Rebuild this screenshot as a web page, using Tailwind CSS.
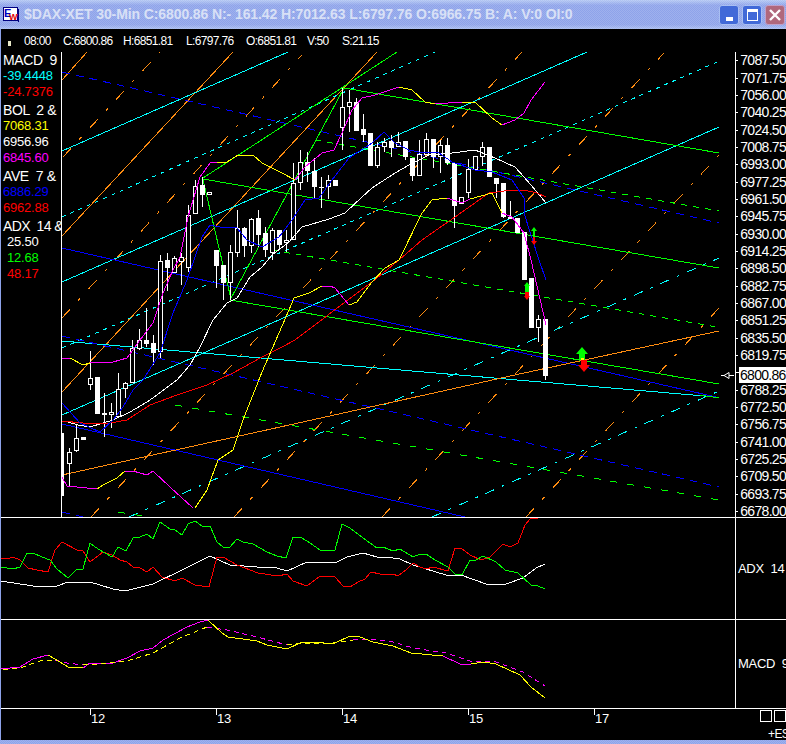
<!DOCTYPE html>
<html lang="en">
<head>
<meta charset="UTF-8" />
<title>$DAX-XET 30-Min</title>
<script src="https://cdn.jsdelivr.net/npm/@tailwindcss/browser@4"></script>
</head>
<body class="bg-black">
<div class="w-[786px] h-[744px] overflow-hidden flex flex-col font-['Liberation_Sans',Arial,sans-serif] text-white bg-black">

  <!-- window title bar -->
  <div class="h-[29px] shrink-0 flex items-center pl-[3px] pr-px bg-[conic-gradient(#ffffff26_25%,#0000_0_50%,#ffffff26_0_75%,#0000_0),linear-gradient(#b4c8f3,#8ea3ea_18%,#8ea3ea_85%,#a9bdf0)] bg-[length:2px_2px,100%_100%]">
    <svg width="16" height="15" viewBox="0 0 16 15" class="shrink-0">
      <rect x="0.5" y="0.5" width="14" height="13" fill="#fff" stroke="#000080" />
      <rect x="15" y="2" width="1" height="13" fill="#000080" />
      <text x="1" y="10" font-size="11" font-weight="700" fill="#0000c0" font-family="Liberation Sans">E</text>
      <text x="6" y="13" font-size="9" font-weight="700" fill="#e00000" font-family="Liberation Sans">W</text>
    </svg>
    <div class="ml-[5px] text-[14px] tracking-[-0.1px] font-bold text-[#d8e0f6] whitespace-nowrap">$DAX-XET 30-Min C:6800.86 N:- 161.42 H:7012.63 L:6797.76 O:6966.75 B: A: V:0 OI:0</div>
    <div class="ml-auto flex gap-[3px]">
      <div class="w-5 h-5 rounded-[3px] border border-[#a9bff2] bg-[#4169d8] flex items-end justify-center pb-[3px]"><div class="w-[7px] h-1 bg-white"></div></div>
      <div class="w-5 h-5 rounded-[3px] border border-[#a9bff2] bg-[#4169d8] flex items-center justify-center"><div class="w-[11px] h-[12px] border border-white border-t-[3px]"></div></div>
      <div class="w-5 h-5 rounded-[3px] border border-[#c0a0c8] bg-[#b0687c] flex items-center justify-center">
        <svg width="12" height="12" viewBox="0 0 12 12"><path d="M1 1L11 11M11 1L1 11" stroke="#fff" stroke-width="2.4" /></svg>
      </div>
    </div>
  </div>

  <div class="flex-1 min-h-0 flex flex-col border-l border-[#8ea3ea]">

    <!-- quote line -->
    <div class="h-[23px] shrink-0 flex items-center text-[12px] tracking-[-0.65px] whitespace-nowrap">
      <div class="w-[3px] h-[5px] ml-[7px] mr-[13px] mt-[5px] bg-[#e8e8c8]"></div>
      <span class="w-[39px]">08:00</span>
      <span class="w-[60px]">C:6800.86</span>
      <span class="w-[63px]">H:6851.81</span>
      <span class="w-[60px]">L:6797.76</span>
      <span class="w-[61px]">O:6851.81</span>
      <span class="w-[35px]">V:50</span>
      <span>S:21.15</span>
    </div>

    <!-- price panel -->
    <div class="h-[466px] shrink-0 flex border-b border-white">
      <div class="w-[61px] shrink-0 border-r border-white overflow-hidden pl-[2px] text-[13px] leading-[16px] tracking-[-0.2px]">
        <div class="mb-[2px]">
          <div class="text-[14px] tracking-[-0.4px] whitespace-pre">MACD  9</div>
          <div class="text-[#00ffff]">-39.4448</div>
          <div class="text-[#ff0000]">-24.7376</div>
        </div>
        <div class="mb-[2px]">
          <div class="text-[14px] tracking-[-0.4px] whitespace-pre">BOL  2 &amp;</div>
          <div class="text-[#ffff00]">7068.31</div>
          <div>6956.96</div>
          <div class="text-[#ff00ff]">6845.60</div>
        </div>
        <div class="mb-[2px]">
          <div class="text-[14px] tracking-[-0.4px] whitespace-pre">AVE  7 &amp;</div>
          <div class="text-[#0000ff]">6886.29</div>
          <div class="text-[#ff0000]">6962.88</div>
        </div>
        <div>
          <div class="text-[14px] tracking-[-0.6px] whitespace-pre">ADX  14 &amp;</div>
          <div class="pl-1">25.50</div>
          <div class="pl-1 text-[#00ff00]">12.68</div>
          <div class="pl-1 text-[#ff0000]">48.17</div>
        </div>
      </div>

      <svg id="chart" width="673" height="465" viewBox="62 52 673 465" class="shrink-0" shape-rendering="crispEdges" fill="none">
        <!-- orange fan -->
        <g stroke="#ff8c10">
          <path d="M62 80L87 52M62 236L233 52M62 392L377 52" />
          <path stroke-dasharray="12 12 3 12" d="M63 157L160 52M62 318L302 55M91 517L522 52M234 517L664 53M382 517L719 155M526 517L719 308" />
        </g>
        <!-- cyan channels -->
        <g stroke="#00ffff">
          <path d="M62 151L288 52M62 282L587 52M62 415L719 127" />
          <path stroke-dasharray="4 5" d="M62 217L435 52M62 348L717 62" />
          <path stroke-dasharray="10 8 3 8" d="M129 517L719 258M432 517L719 391" />
          <path d="M62 341L716 397" />
        </g>
        <!-- blue channels -->
        <g stroke="#0000ff">
          <path stroke-dasharray="8 6" d="M62 72L719 223M62 336L719 487M62 512L83 517" />
          <path d="M62 248L716 397M62 424L465 517" />
        </g>
        <!-- green channels -->
        <g stroke="#00ff00">
          <path d="M344 88L719 153M203 179L719 268M230 300L719 384M700 395L719 398" />
          <path stroke-dasharray="6 6" d="M315 140L719 211M272 250L717 327" />
          <path stroke-dasharray="7 10" d="M175 405L719 500M118 512L150 517" />
          <path d="M203 178L397 52M230 300L344 88M203 180L231 299" />
        </g>
        <path stroke="#ff8c10" d="M62 475L262 431L524 373L719 331" />

        <g id="candles"></g>

        <!-- averages -->
        <polyline stroke="#ffffff" points="68,422 78,425 90,427 103,423 113,420 130,412 147,402 157,395 177,380 190,365 200,347 213,320 227,303 237,298 250,277 262,267 272,255 289,242 302,227 329,219 345,213 362,197 372,188 395,173 409,165 429,155 452,153 475,150 495,158 515,167 524,177 537,192 546,203" />
        <polyline stroke="#ff0000" points="62,421 83,423 110,423 127,420 150,405 177,395 207,385 233,373 262,357 282,347 295,340 315,325 345,302 372,282 399,260 422,240 455,217 489,193 512,190 524,190 537,193 546,197" />
        <polyline stroke="#0000ff" points="62,403 80,423 100,432 113,420 123,407 133,390 143,380 160,353 173,313 187,280 195,257 202,237 210,225 220,227 237,228 247,240 262,247 279,237 292,220 305,200 319,198 332,180 349,158 372,143 384,132 395,143 409,150 419,152 439,153 452,162 475,170 492,172 512,180 524,198 524,213 539,260 546,280" />
        <!-- bollinger upper -->
        <polyline stroke="#ff00ff" points="62,358 70,358" />
        <polyline stroke="#ffff00" points="70,358 83,365 90,363" />
        <polyline stroke="#ff00ff" points="90,363 113,362 127,358 140,340 153,323 163,293 173,270 180,257 188,217 200,177 210,163 217,162" />
        <polyline stroke="#ffff00" points="217,162 227,162 238,155" />
        <polyline stroke="#ffff00" points="238,155 253,155 262,163 282,173 295,180" />
        <polyline stroke="#ff00ff" points="295,180 305,167 322,153 334,150 342,133 352,110 362,98 375,95 399,87" />
        <polyline stroke="#ffff00" points="399,87 412,90 425,102 435,104" />
        <polyline stroke="#ff00ff" points="435,104 462,102" />
        <polyline stroke="#ffff00" points="462,102 475,102 492,118 502,125" />
        <polyline stroke="#ff00ff" points="502,125 515,120 524,113 531,100 545,82" />
        <!-- bollinger lower -->
        <polyline stroke="#ff00ff" points="62,477 67,486 97,489" />
        <polyline stroke="#ffff00" points="97,489 103,485 117,478 125,471" />
        <polyline stroke="#ff00ff" points="125,471 133,471 147,475 153,471 170,487 193,508" />
        <polyline stroke="#ffff00" points="195,508 207,490 218,460 233,450 243,420 262,372 289,310 294,298 309,293 322,286" />
        <polyline stroke="#ff00ff" points="322,286 330,286 335,288 349,305" />
        <polyline stroke="#ffff00" points="349,305 357,302 372,282 385,268 399,260 422,213 432,200 447,198" />
        <polyline stroke="#ff00ff" points="447,198 462,203 470,199" />
        <polyline stroke="#ffff00" points="470,199 492,193 502,213" />
        <polyline stroke="#ff00ff" points="502,213 512,217 524,233 531,260 546,325" />

        <!-- signal arrows -->
        <g shape-rendering="auto">
          <path fill="#00ff00" d="M534 227l3 4h-2v6h-2v-6h-2z" />
          <path fill="#ff0000" d="M534 245l3-4h-2v-4h-2v4h-2z" />
          <path fill="#00ff00" d="M527 282l3 4h-1v6h-4v-6h-1z" />
          <path fill="#ff0000" d="M527 300l3-4h-1v-4h-4v4h-1z" />
          <path fill="#00ff00" d="M582 347l6 7h-3v6h-6v-6h-3z" />
          <path fill="#ff0000" d="M584 372l6-7h-3v-5h-6v5h-3z" />
          <path fill="#ffff00" d="M581 358h3v2h-3z" />
          <path stroke="#fff" d="M721 375.500h3M729 375.500h5M724 375.500l5-3v6z" />
        </g>
      </svg>

      <!-- price scale -->
      <div class="relative flex-1 min-w-0 border-l border-white overflow-hidden text-[14px] tracking-[-0.7px]">
        <div class="flex items-center h-[17.35px] gap-[2px]"><div class="w-[3px] h-px bg-white"></div><span>7087.50</span></div>
        <div class="flex items-center h-[17.35px] gap-[2px]"><div class="w-[3px] h-px bg-white"></div><span>7071.75</span></div>
        <div class="flex items-center h-[17.35px] gap-[2px]"><div class="w-[3px] h-px bg-white"></div><span>7056.00</span></div>
        <div class="flex items-center h-[17.35px] gap-[2px]"><div class="w-[3px] h-px bg-white"></div><span>7040.25</span></div>
        <div class="flex items-center h-[17.35px] gap-[2px]"><div class="w-[3px] h-px bg-white"></div><span>7024.50</span></div>
        <div class="flex items-center h-[17.35px] gap-[2px]"><div class="w-[3px] h-px bg-white"></div><span>7008.75</span></div>
        <div class="flex items-center h-[17.35px] gap-[2px]"><div class="w-[3px] h-px bg-white"></div><span>6993.00</span></div>
        <div class="flex items-center h-[17.35px] gap-[2px]"><div class="w-[3px] h-px bg-white"></div><span>6977.25</span></div>
        <div class="flex items-center h-[17.35px] gap-[2px]"><div class="w-[3px] h-px bg-white"></div><span>6961.50</span></div>
        <div class="flex items-center h-[17.35px] gap-[2px]"><div class="w-[3px] h-px bg-white"></div><span>6945.75</span></div>
        <div class="flex items-center h-[17.35px] gap-[2px]"><div class="w-[3px] h-px bg-white"></div><span>6930.00</span></div>
        <div class="flex items-center h-[17.35px] gap-[2px]"><div class="w-[3px] h-px bg-white"></div><span>6914.25</span></div>
        <div class="flex items-center h-[17.35px] gap-[2px]"><div class="w-[3px] h-px bg-white"></div><span>6898.50</span></div>
        <div class="flex items-center h-[17.35px] gap-[2px]"><div class="w-[3px] h-px bg-white"></div><span>6882.75</span></div>
        <div class="flex items-center h-[17.35px] gap-[2px]"><div class="w-[3px] h-px bg-white"></div><span>6867.00</span></div>
        <div class="flex items-center h-[17.35px] gap-[2px]"><div class="w-[3px] h-px bg-white"></div><span>6851.25</span></div>
        <div class="flex items-center h-[17.35px] gap-[2px]"><div class="w-[3px] h-px bg-white"></div><span>6835.50</span></div>
        <div class="flex items-center h-[17.35px] gap-[2px]"><div class="w-[3px] h-px bg-white"></div><span>6819.75</span></div>
        <div class="flex items-center h-[17.35px] gap-[2px]"><div class="w-[3px] h-px bg-white"></div></div>
        <div class="flex items-center h-[17.35px] gap-[2px]"><div class="w-[3px] h-px bg-white"></div><span>6788.25</span></div>
        <div class="flex items-center h-[17.35px] gap-[2px]"><div class="w-[3px] h-px bg-white"></div><span>6772.50</span></div>
        <div class="flex items-center h-[17.35px] gap-[2px]"><div class="w-[3px] h-px bg-white"></div><span>6756.75</span></div>
        <div class="flex items-center h-[17.35px] gap-[2px]"><div class="w-[3px] h-px bg-white"></div><span>6741.00</span></div>
        <div class="flex items-center h-[17.35px] gap-[2px]"><div class="w-[3px] h-px bg-white"></div><span>6725.25</span></div>
        <div class="flex items-center h-[17.35px] gap-[2px]"><div class="w-[3px] h-px bg-white"></div><span>6709.50</span></div>
        <div class="flex items-center h-[17.35px] gap-[2px]"><div class="w-[3px] h-px bg-white"></div><span>6693.75</span></div>
        <div class="flex items-center h-[17.35px] gap-[2px]"><div class="w-[3px] h-px bg-white"></div><span>6678.00</span></div>
        <div class="absolute left-[3px] top-[315px] h-4 w-[47px] bg-white text-black leading-4 pl-px">6800.86</div>
      </div>
    </div>

    <!-- ADX panel -->
    <div class="h-[102px] shrink-0 flex border-b border-white">
      <svg width="734" height="101" viewBox="1 518 734 101" class="shrink-0" shape-rendering="crispEdges" fill="none">
        <polyline stroke="#ffffff" points="1,581 20,584 33,586 45,587 57,586 68,582 90,582 113,589 125,591 153,584 180,571 210,556 230,565 257,567 277,568 287,571 307,562 335,563 347,557 363,553 377,557 393,558 400,559 413,565 446,575 461,575 486,584 506,584 523,578 536,568 545,564" />
        <polyline stroke="#ff0000" points="1,558 7,559 13,557 20,560 28,568 37,570 48,572 55,550 62,542 77,550 83,551 90,562 103,552 112,555 120,560 127,562 133,567 140,568 147,572 153,567 162,577 175,581 182,578 195,585 209,587 217,557 223,557 237,565 258,573 278,576 287,574 293,581 307,586 320,576 335,577 343,586 350,587 358,582 365,579 371,572 380,574 393,574 398,576 406,570 413,563 420,567 426,569 433,567 448,571 455,548 461,548 470,555 481,560 490,557 503,544 510,547 518,543 525,525 531,518 538,518" />
        <polyline stroke="#00ff00" points="1,567 13,569 20,567 27,553 33,553 42,557 50,560 57,569 68,578 77,569 83,569 90,543 98,549 112,557 118,547 126,551 133,538 140,537 147,534 153,539 160,522 170,529 175,530 182,535 188,524 195,521 202,526 210,526 217,542 223,547 230,547 237,539 243,542 253,544 267,552 277,556 286,558 293,537 302,538 310,543 320,550 335,550 342,524 350,528 363,538 377,548 383,547 393,551 400,549 413,557 420,554 426,554 435,560 448,567 455,574 462,575 470,560 476,560 483,556 496,562 505,570 518,573 531,585 538,586 545,589" />
      </svg>
      <div class="flex-1 min-w-0 border-l border-white overflow-hidden pl-[2px] pt-[43px] text-[13px] tracking-[-0.3px] leading-[16px] whitespace-pre">ADX  14</div>
    </div>

    <!-- MACD panel -->
    <div class="h-[89px] shrink-0 flex border-b border-white">
      <svg width="734" height="88" viewBox="1 620 734 88" class="shrink-0" shape-rendering="crispEdges" fill="none">
        <g stroke="#ff00ff">
          <polyline points="1,669 20,667 33,659 48,655" />
          <polyline points="83,668 90,663 113,663 127,658 140,651 153,648 163,640 187,627 200,622 208,620" />
          <polyline points="443,656 460,664 471,664" />
          <polyline stroke-dasharray="5 4" points="55,660 67,663 83,665" />
          <polyline stroke-dasharray="5 4" points="207,627 227,630 257,637 287,645" />
          <polyline stroke-dasharray="5 4" points="353,640 370,639 393,642 413,648 446,653 470,661 496,662 523,672 545,686" />
        </g>
        <g stroke="#ffff00">
          <polyline points="48,655 60,662 68,667 83,668" />
          <polyline points="208,620 222,633 228,637 257,641 267,645 287,649 302,642 315,642 333,644 350,636 360,637 373,642 393,646 411,653 443,656" />
          <polyline points="471,664 483,662 496,664 520,675 531,687 545,698" />
          <polyline stroke-dasharray="5 4" points="3,670 20,668 40,661 55,660" />
          <polyline stroke-dasharray="5 4" points="83,665 97,664 127,661 153,653 180,638 207,627" />
          <polyline stroke-dasharray="5 4" points="287,645 302,643 333,643 353,640" />
        </g>
      </svg>
      <div class="flex-1 min-w-0 border-l border-white overflow-hidden pl-[2px] pt-[36px] text-[13px] tracking-[-0.3px] leading-[16px] whitespace-pre">MACD  9</div>
    </div>

    <!-- time scale -->
    <svg width="785" height="31" viewBox="1 709 785 31" class="shrink-0" fill="none">
      <path shape-rendering="crispEdges" stroke="#fff" d="M90.500 709v6M216.500 709v6M342.500 709v6M468.500 709v6M594.500 709v6" />
      <g fill="#fff" font-size="13" font-family="Liberation Sans" letter-spacing="-0.3">
        <text x="91" y="723">12</text>
        <text x="217" y="723">13</text>
        <text x="343" y="723">14</text>
        <text x="469" y="723">15</text>
        <text x="595" y="723">17</text>
      </g>
      <text x="768" y="738" fill="#fff" font-size="12" font-family="Liberation Sans" letter-spacing="-0.6">+ES</text>
      <path shape-rendering="crispEdges" stroke="#fff" d="M760.500 710.500h11v11h-11zM774.500 710.500h11v11h-11z" />
    </svg>
  </div>

  <div class="h-1 shrink-0 bg-[conic-gradient(#ffffff26_25%,#0000_0_50%,#ffffff26_0_75%,#0000_0),linear-gradient(#8ea3ea,#8ea3ea)] bg-[length:2px_2px,100%_100%]"></div>
</div>

<script>
  // wick top, wick bottom, body top, body bottom, hollow. One bar every 7px from x=69.
  const bars = [
    [448,487,452,464,1],[425,452,438,451,1],[437,440,437,440,0],[351,390,378,385,1],[377,414,377,414,0],
    [393,437,413,415,0],[403,428,412,415,1],[373,418,389,417,1],[382,398,383,389,1],[340,383,348,383,1],
    [329,350,340,349,1],[308,347,340,344,0],[335,365,343,353,0],[255,358,261,352,1],[253,291,260,268,0],
    [256,273,258,273,1],[253,285,257,262,1],[205,272,215,268,1],[180,214,186,214,1],[177,207,185,195,0],
    [192,195,192,195,1],[250,288,250,266,0],[265,300,265,283,0],[245,300,252,283,1],[210,257,228,253,1],
    [227,257,228,246,0],[218,253,219,246,1],[210,247,218,235,0],[227,257,233,250,0],[228,260,230,253,1],
    [230,250,230,245,0],[230,252,240,243,1],[163,240,183,240,1],[150,190,162,183,1],[152,182,162,171,0],
    [158,198,171,187,0],[177,208,187,188,0],[175,199,180,187,1],[180,186,180,186,0],[88,150,107,128,1],
    [90,132,102,107,1],[98,131,102,131,0],[114,142,129,135,0],[133,166,133,166,0],[142,168,147,166,1],
    [138,152,142,147,1],[135,157,141,148,0],[132,147,142,147,1],[141,160,141,157,0],[158,181,158,176,0],
    [140,176,154,176,1],[133,155,139,155,1],[139,168,139,157,0],[140,173,145,157,1],[138,165,145,163,0],
    [163,228,163,206,0],[197,204,197,204,1],[159,198,169,193,1],[156,170,156,170,1],[142,166,147,157,1],
    [147,177,147,177,0],[178,198,178,184,0],[183,218,183,217,0],[201,219,217,219,0],[218,233,218,233,0],
    [232,280,232,280,0],[278,328,278,328,0],[315,342,319,328,1],[319,380,319,376,0]
  ];
  const svgNS = "http://www.w3.org/2000/svg";
  const group = document.getElementById("candles");
  const addRect = (x, y, w, h, attrs) => {
    const r = document.createElementNS(svgNS, "rect");
    r.setAttribute("x", x); r.setAttribute("y", y); r.setAttribute("width", w); r.setAttribute("height", h);
    for (const k in attrs) r.setAttribute(k, attrs[k]);
    group.appendChild(r);
  };
  bars.forEach((b, i) => {
    const x = 69 + i * 7;
    addRect(x, b[0], 1, b[1] - b[0], { fill: "#fff" });
    if (b[4]) addRect(x - 1.5, b[2] + 0.5, 4, Math.max(b[3] - b[2] - 1, 1), { fill: "#000", stroke: "#fff" });
    else addRect(x - 2, b[2], 5, b[3] - b[2], { fill: "#fff" });
  });
  addRect(62, 433, 2, 63, { fill: "#fff" });
</script>
</body>
</html>
